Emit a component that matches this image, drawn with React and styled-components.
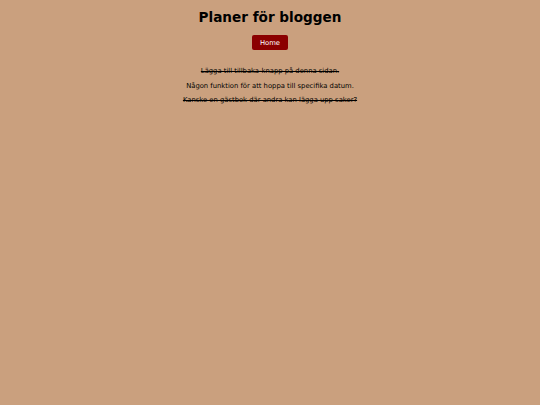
import React from "react";
import styled, { createGlobalStyle } from "styled-components";

const Global = createGlobalStyle`
  html, body { margin: 0; padding: 0; background: #caa07e; }
  body { font-family: "DejaVu Sans", sans-serif; color: #000; }
`;

const Page = styled.div`
  display: flex;
  flex-direction: column;
  align-items: center;
  padding-top: 9px;
`;

const Title = styled.h1`
  margin: 0;
  font-size: 13.6px;
  font-weight: bold;
  line-height: 17px;
`;

const Button = styled.button`
  margin-top: 9px;
  width: 36px;
  height: 15px;
  padding: 0;
  border: none;
  border-radius: 2px;
  background: #8b0000;
  color: #fff;
  font-family: "DejaVu Sans", sans-serif;
  font-size: 6.8px;
`;

const List = styled.div`
  margin-top: 17px;
  display: flex;
  flex-direction: column;
  align-items: center;
  gap: 5px;
`;

const Item = styled.p`
  margin: 0;
  font-size: 6.8px;
  line-height: 9.5px;
  text-decoration: ${(p) => (p.$done ? "line-through" : "none")};
`;

export default function App() {
  return (
    <>
      <Global />
      <Page>
        <Title>Planer för bloggen</Title>
        <Button>Home</Button>
        <List>
          <Item $done>Lägga till tillbaka-knapp på denna sidan.</Item>
          <Item>Någon funktion för att hoppa till specifika datum.</Item>
          <Item $done>Kanske en gästbok där andra kan lägga upp saker?</Item>
        </List>
      </Page>
    </>
  );
}
